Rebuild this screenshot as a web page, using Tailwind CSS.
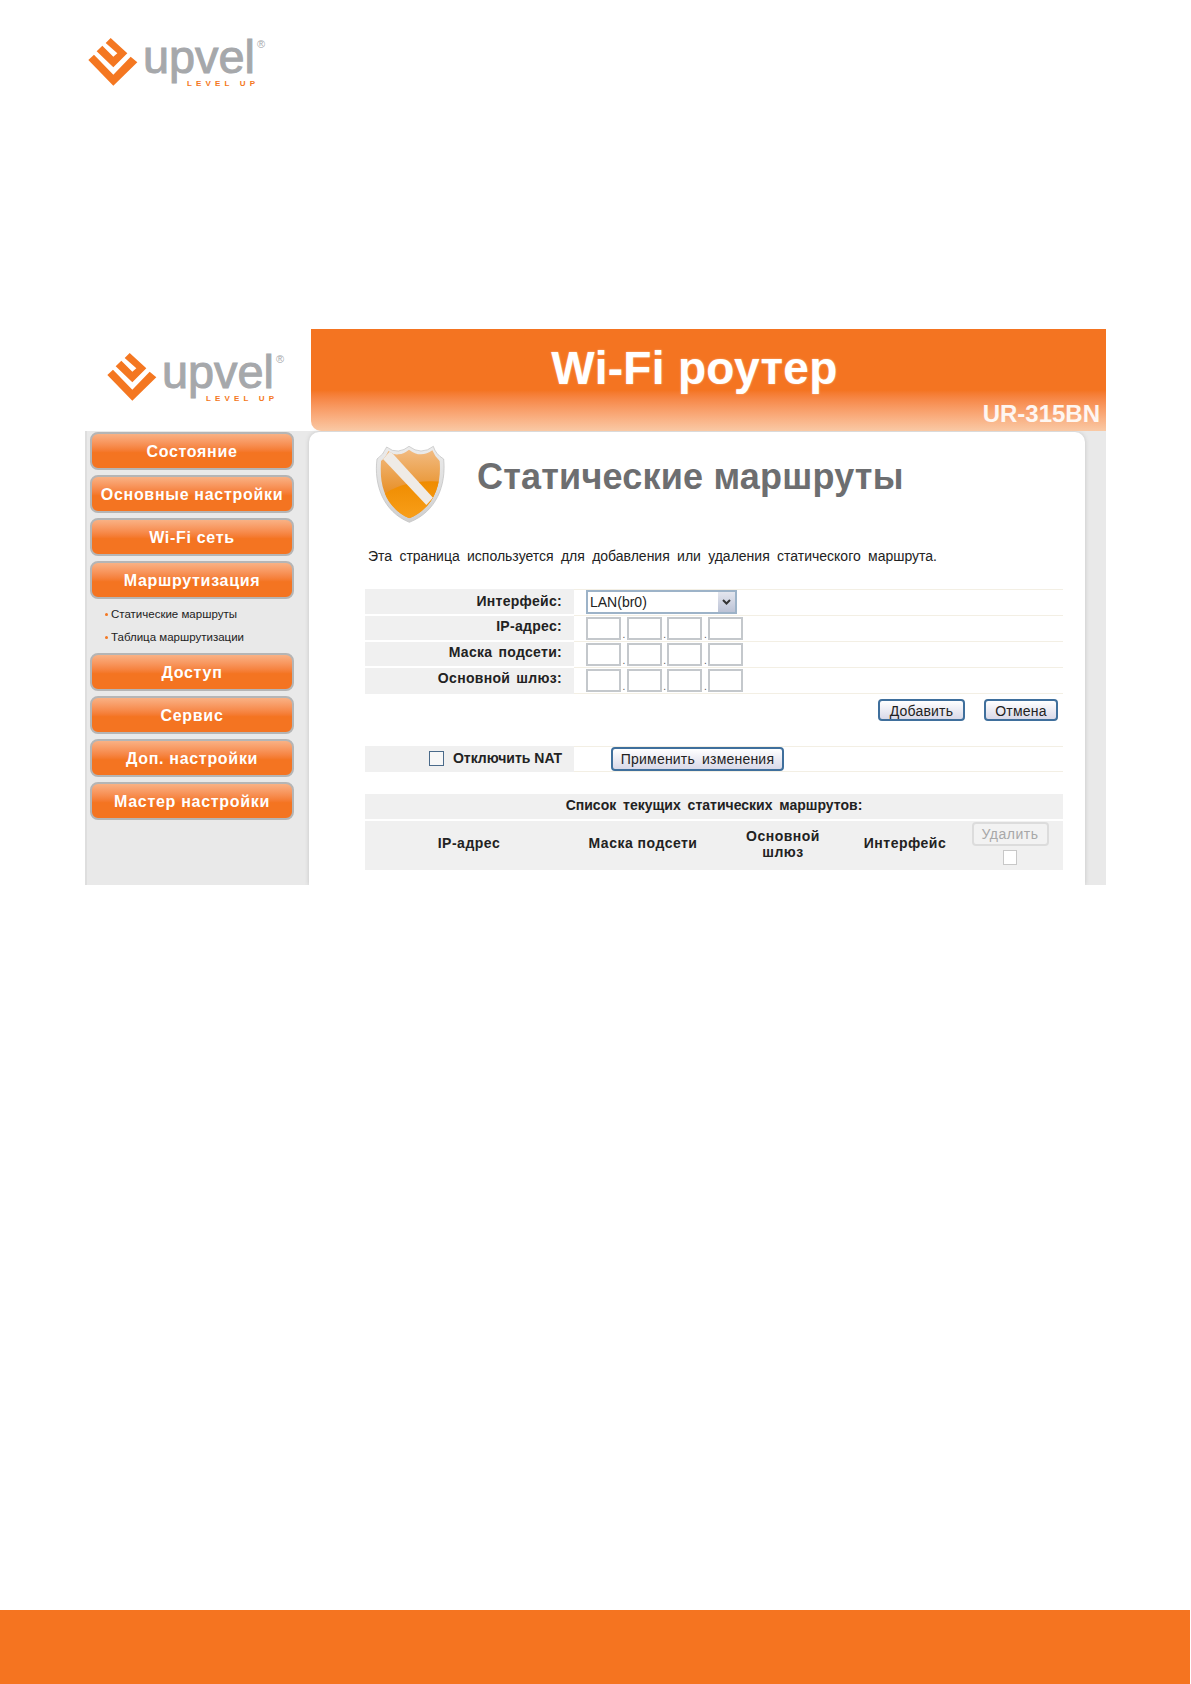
<!DOCTYPE html>
<html>
<head>
    <meta charset="utf-8" />
    <script src="https://cdn.jsdelivr.net/npm/@tailwindcss/browser@4"></script>
    <title>UPVEL</title>
</head>
<body class="bg-white font-['Liberation_Sans',Arial,sans-serif]">
    <div class="relative h-[1684px] w-[1191px] overflow-hidden">

        <!-- page logo -->
        <div class="h-[329px] pl-[88px] pt-[28px]">
            <svg width="184" height="62" viewBox="0 -10 184 62">
                <g transform="translate(-4,-4) scale(0.3333)" fill="#f47721">
                    <polygon points="13,78 30,62 88,122 140,68 160,85 88,155" />
                    <polygon points="80,12 130,58 88,100 38,52 55,35 88,68 100,58 65,27" />
                </g>
                <text x="55" y="35" font-size="46" fill="#a6a8ab" stroke="#a6a8ab" stroke-width="1" textLength="112" lengthAdjust="spacingAndGlyphs" font-family="Liberation Sans">upvel</text>
                <text x="99" y="48" font-size="8" font-weight="bold" fill="#f47721" textLength="68" font-family="Liberation Sans">LEVEL UP</text>
                <text x="169" y="10" font-size="11" fill="#a6a8ab" font-family="Liberation Sans">®</text>
            </svg>
        </div>

        <!-- router screenshot -->
        <div class="ml-[85px] h-[556px] w-[1021px] overflow-hidden">
            <div class="flex h-[102px]">
                <div class="w-[226px] pl-[22px] pt-[14px]">
                    <svg width="184" height="62" viewBox="0 -10 184 62">
                        <g transform="translate(-4,-4) scale(0.3333)" fill="#f47721">
                            <polygon points="13,78 30,62 88,122 140,68 160,85 88,155" />
                            <polygon points="80,12 130,58 88,100 38,52 55,35 88,68 100,58 65,27" />
                        </g>
                        <text x="55" y="35" font-size="46" fill="#a6a8ab" stroke="#a6a8ab" stroke-width="1" textLength="112" lengthAdjust="spacingAndGlyphs" font-family="Liberation Sans">upvel</text>
                        <text x="99" y="48" font-size="8" font-weight="bold" fill="#f47721" textLength="68" font-family="Liberation Sans">LEVEL UP</text>
                        <text x="169" y="10" font-size="11" fill="#a6a8ab" font-family="Liberation Sans">®</text>
                    </svg>
                </div>
                <div class="relative flex-1 rounded-bl-[10px] bg-gradient-to-b from-[#f47421] from-60% to-[#f9c9a5]">
                    <div class="pt-[9px] pr-[28px] text-center text-[46px] leading-[60px] font-bold tracking-[0.3px] text-white [text-shadow:0_0_2px_#ffffff80]">Wi-Fi роутер</div>
                    <div class="absolute right-[6px] bottom-[3px] text-[24px] leading-[28px] font-bold text-white/90">UR-315BN</div>
                </div>
            </div>

            <div class="flex h-[454px] bg-[#e9e9e9]">
                <!-- sidebar -->
                <div class="flex w-[224px] flex-col gap-[5px] border-l-2 border-[#dedede] pt-[1px] pl-[3px]">
                    <a class="flex h-[38px] w-[204px] items-center justify-center rounded-[8px] border-2 border-[#b5b5b5] bg-gradient-to-b from-[#f9b184] to-[#f47421] to-55% pt-[2px] text-[16px] font-bold tracking-[0.7px] text-white">Состояние</a>
                    <a class="flex h-[38px] w-[204px] items-center justify-center rounded-[8px] border-2 border-[#b5b5b5] bg-gradient-to-b from-[#f9b184] to-[#f47421] to-55% pt-[2px] text-[16px] font-bold tracking-[0.7px] text-white">Основные настройки</a>
                    <a class="flex h-[38px] w-[204px] items-center justify-center rounded-[8px] border-2 border-[#b5b5b5] bg-gradient-to-b from-[#f9b184] to-[#f47421] to-55% pt-[2px] text-[16px] font-bold tracking-[0.7px] text-white">Wi-Fi сеть</a>
                    <a class="flex h-[38px] w-[204px] items-center justify-center rounded-[8px] border-2 border-[#b5b5b5] bg-gradient-to-b from-[#f9b184] to-[#f47421] to-55% pt-[2px] text-[16px] font-bold tracking-[0.7px] text-white">Маршрутизация</a>
                    <div class="-my-[1px] pl-[15px] text-[11.5px] leading-[23px] text-[#222]">
                        <div class="flex items-center gap-[3px]"><span class="h-[3px] w-[3px] rounded-full bg-[#f47721]"></span>Статические маршруты</div>
                        <div class="flex items-center gap-[3px]"><span class="h-[3px] w-[3px] rounded-full bg-[#f47721]"></span>Таблица маршрутизации</div>
                    </div>
                    <a class="flex h-[38px] w-[204px] items-center justify-center rounded-[8px] border-2 border-[#b5b5b5] bg-gradient-to-b from-[#f9b184] to-[#f47421] to-55% pt-[2px] text-[16px] font-bold tracking-[0.7px] text-white">Доступ</a>
                    <a class="flex h-[38px] w-[204px] items-center justify-center rounded-[8px] border-2 border-[#b5b5b5] bg-gradient-to-b from-[#f9b184] to-[#f47421] to-55% pt-[2px] text-[16px] font-bold tracking-[0.7px] text-white">Сервис</a>
                    <a class="flex h-[38px] w-[204px] items-center justify-center rounded-[8px] border-2 border-[#b5b5b5] bg-gradient-to-b from-[#f9b184] to-[#f47421] to-55% pt-[2px] text-[16px] font-bold tracking-[0.7px] text-white">Доп. настройки</a>
                    <a class="flex h-[38px] w-[204px] items-center justify-center rounded-[8px] border-2 border-[#b5b5b5] bg-gradient-to-b from-[#f9b184] to-[#f47421] to-55% pt-[2px] text-[16px] font-bold tracking-[0.7px] text-white">Мастер настройки</a>
                </div>

                <!-- content card -->
                <div class="mt-[1px] w-[776px] rounded-t-[10px] bg-white pr-[22px] pl-[56px] shadow-[0_0_4px_#c4c4c4]">
                    <div class="flex items-center pt-[3px]">
                        <svg width="90" height="94" viewBox="0 0 270 282">
                            <defs>
                                <linearGradient id="rim" x1="0" y1="0" x2="0" y2="1">
                                    <stop offset="0" stop-color="#ececec" />
                                    <stop offset="1" stop-color="#cfcfcf" />
                                </linearGradient>
                                <linearGradient id="gloss" x1="0" y1="0" x2="0" y2="1">
                                    <stop offset="0" stop-color="#f3c08c" />
                                    <stop offset="0.6" stop-color="#e8922c" />
                                </linearGradient>
                                <linearGradient id="lower" x1="0" y1="0" x2="0" y2="1">
                                    <stop offset="0" stop-color="#ef8c00" />
                                    <stop offset="1" stop-color="#f9a01b" />
                                </linearGradient>
                                <clipPath id="shieldClip">
                                    <path d="M48,78 Q62,68 70,48 Q86,60 100,58 Q118,56 132,44 Q150,58 168,58 Q186,58 202,46 Q210,66 224,78 C230,150 207,218 133,250 C61,218 42,150 48,78 Z" />
                                </clipPath>
                            </defs>
                            <path fill="url(#rim)" stroke="#bdbdbd" stroke-width="2" d="M36,72 Q55,60 65,36 Q82,50 100,48 Q118,46 132,34 Q150,48 168,48 Q188,48 205,34 Q212,58 236,72 C244,150 215,230 133,262 C55,230 26,150 36,72 Z" />
                            <g clip-path="url(#shieldClip)">
                                <rect x="30" y="30" width="210" height="230" fill="url(#gloss)" />
                                <path fill="url(#lower)" d="M40,190 Q110,130 230,140 L230,260 L40,260 Z" />
                                <path fill="#efebe6" d="M54,72 L76,48 L204,188 L184,210 Z" />
                            </g>
                        </svg>
                        <div class="mb-[10px] ml-[22px] text-[36px] leading-[40px] font-bold tracking-[0.2px] whitespace-nowrap text-[#6d6e70]">Статические маршруты</div>
                    </div>

                    <p class="mt-[19px] ml-[3px] text-[14px] leading-[16px] text-[#222] [word-spacing:3.4px]">Эта страница используется для добавления или удаления статического маршрута.</p>

                    <!-- add route form -->
                    <div class="mt-[25px] text-[14px] leading-[18px] text-[#222]">
                        <div class="flex h-[27px]">
                            <div class="w-[209px] border-b-2 border-white bg-[#f0f0f0] pt-[3px] pr-[12px] text-right font-bold tracking-[0.3px] [word-spacing:2px]">Интерфейс:</div>
                            <div class="flex-1 border-y border-[#f3efe4] pl-[12px]">
                                <div class="flex h-[24px] w-[151px] items-center justify-between border-2 border-[#9db3c8] pl-[2px]">LAN(br0)
                                    <span class="flex h-[20px] w-[17px] items-center justify-center bg-gradient-to-b from-[#e4e6ee] to-[#bcc3d6]">
                                        <svg width="9" height="6" viewBox="0 0 9 6"><path d="M1 1 L4.5 4.5 L8 1" fill="none" stroke="#333" stroke-width="2" /></svg>
                                    </span>
                                </div>
                            </div>
                        </div>
                        <div class="flex h-[26px]">
                            <div class="w-[209px] border-b-2 border-white bg-[#f0f0f0] pt-[1px] pr-[12px] text-right font-bold tracking-[0.3px] [word-spacing:2px]">IP-адрес:</div>
                            <div class="flex flex-1 items-end gap-[1.5px] border-b border-[#f3efe4] pb-[1px] pl-[12px] text-[10px] leading-[10px] text-[#555]">
                                <input class="h-[23px] w-[35px] border-2 border-[#c4c8cc]" /><span class="w-[2.7px]">.</span>
                                <input class="h-[23px] w-[35px] border-2 border-[#c4c8cc]" /><span class="w-[2.7px]">.</span>
                                <input class="h-[23px] w-[35px] border-2 border-[#c4c8cc]" /><span class="w-[2.7px]">.</span>
                                <input class="h-[23px] w-[35px] border-2 border-[#c4c8cc]" />
                            </div>
                        </div>
                        <div class="flex h-[26px]">
                            <div class="w-[209px] border-b-2 border-white bg-[#f0f0f0] pt-[1px] pr-[12px] text-right font-bold tracking-[0.3px] [word-spacing:2px]">Маска подсети:</div>
                            <div class="flex flex-1 items-end gap-[1.5px] border-b border-[#f3efe4] pb-[1px] pl-[12px] text-[10px] leading-[10px] text-[#555]">
                                <input class="h-[23px] w-[35px] border-2 border-[#c4c8cc]" /><span class="w-[2.7px]">.</span>
                                <input class="h-[23px] w-[35px] border-2 border-[#c4c8cc]" /><span class="w-[2.7px]">.</span>
                                <input class="h-[23px] w-[35px] border-2 border-[#c4c8cc]" /><span class="w-[2.7px]">.</span>
                                <input class="h-[23px] w-[35px] border-2 border-[#c4c8cc]" />
                            </div>
                        </div>
                        <div class="flex h-[26px]">
                            <div class="w-[209px] bg-[#f0f0f0] pt-[1px] pr-[12px] text-right font-bold tracking-[0.3px] [word-spacing:2px]">Основной шлюз:</div>
                            <div class="flex flex-1 items-end gap-[1.5px] border-b border-[#f3efe4] pb-[1px] pl-[12px] text-[10px] leading-[10px] text-[#555]">
                                <input class="h-[23px] w-[35px] border-2 border-[#c4c8cc]" /><span class="w-[2.7px]">.</span>
                                <input class="h-[23px] w-[35px] border-2 border-[#c4c8cc]" /><span class="w-[2.7px]">.</span>
                                <input class="h-[23px] w-[35px] border-2 border-[#c4c8cc]" /><span class="w-[2.7px]">.</span>
                                <input class="h-[23px] w-[35px] border-2 border-[#c4c8cc]" />
                            </div>
                        </div>
                    </div>

                    <div class="mt-[5px] flex justify-end gap-[19px] pr-[5px]">
                        <button class="h-[22px] w-[87px] rounded-[4px] border-2 border-[#3f6f9c] bg-gradient-to-b from-white to-[#d9d9e8] text-[14px] tracking-[0.2px] text-[#222]">Добавить</button>
                        <button class="h-[22px] w-[74px] rounded-[4px] border-2 border-[#3f6f9c] bg-gradient-to-b from-white to-[#d9d9e8] text-[14px] tracking-[0.2px] text-[#222]">Отмена</button>
                    </div>

                    <!-- NAT -->
                    <div class="mt-[25px] flex h-[26px] text-[14px] text-[#222]">
                        <div class="flex w-[209px] items-center justify-end gap-[9px] bg-[#f0f0f0] pr-[12px] pb-[2px] font-bold">
                            <input type="checkbox" class="h-[15px] w-[15px] appearance-none border border-[#4a6a8a] bg-[#f7f7f7]" />
                            <span>Отключить NAT</span>
                        </div>
                        <div class="flex flex-1 items-center border-y border-[#f3efe4] pl-[37px]">
                            <button class="h-[24px] w-[173px] rounded-[4px] border-2 border-[#3f6f9c] bg-gradient-to-b from-white to-[#d9d9e8] text-[14px] tracking-[0.2px] text-[#222] [word-spacing:3px]">Применить изменения</button>
                        </div>
                    </div>

                    <!-- route list -->
                    <div class="mt-[22px] text-[14px] font-bold text-[#222]">
                        <div class="h-[25px] bg-[#f0f0f0] text-center leading-[23px] [word-spacing:3px]">Список текущих статических маршрутов:</div>
                        <div class="mt-[2px] grid h-[49px] grid-cols-[208px_140px_140px_104px_106px] items-center bg-[#f0f0f0] pb-[4px] text-center tracking-[0.5px]">
                            <div>IP-адрес</div>
                            <div>Маска подсети</div>
                            <div class="leading-[16px]">Основной<br />шлюз</div>
                            <div>Интерфейс</div>
                            <div class="flex flex-col items-center gap-[4px] self-start pt-[1px]">
                                <button disabled class="h-[24px] w-[77px] rounded-[4px] border-2 border-[#dcdcdc] bg-[#f2f2f2] text-[14px] font-normal text-[#a8a8a8]">Удалить</button>
                                <input type="checkbox" class="h-[15px] w-[14px] appearance-none border border-[#c8c8c8] bg-white" />
                            </div>
                        </div>
                    </div>
                </div>
            </div>
        </div>

        <div class="absolute bottom-0 left-0 h-[74px] w-[1190px] bg-[#f57420]"></div>
    </div>
</body>
</html>
